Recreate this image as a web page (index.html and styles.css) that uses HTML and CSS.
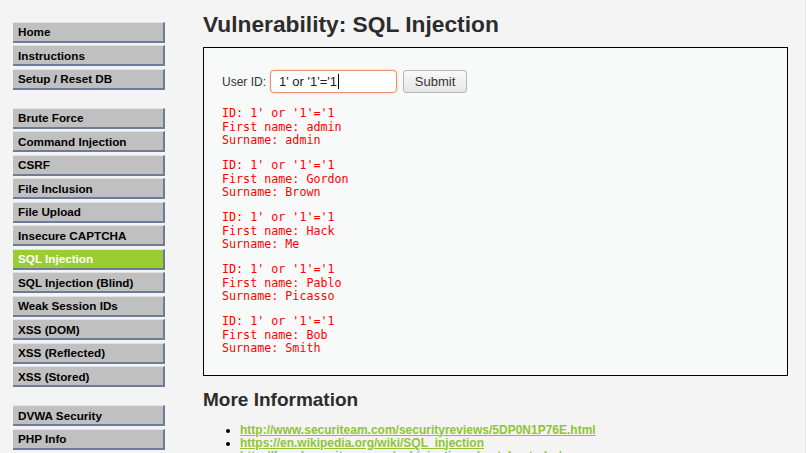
FILE: index.html
```html
<!DOCTYPE html>
<html>
<head>
<meta charset="utf-8">
<title>Vulnerability: SQL Injection</title>
<link rel="stylesheet" href="styles.css">
</head>
<body>
<div class="page">
  <nav class="menu">
    <ul class="menu-block">
      <li><a href="#">Home</a></li>
      <li><a href="#">Instructions</a></li>
      <li><a href="#">Setup / Reset DB</a></li>
    </ul>
    <ul class="menu-block">
      <li><a href="#">Brute Force</a></li>
      <li><a href="#">Command Injection</a></li>
      <li><a href="#">CSRF</a></li>
      <li><a href="#">File Inclusion</a></li>
      <li><a href="#">File Upload</a></li>
      <li><a href="#">Insecure CAPTCHA</a></li>
      <li class="selected"><a href="#">SQL Injection</a></li>
      <li><a href="#">SQL Injection (Blind)</a></li>
      <li><a href="#">Weak Session IDs</a></li>
      <li><a href="#">XSS (DOM)</a></li>
      <li><a href="#">XSS (Reflected)</a></li>
      <li><a href="#">XSS (Stored)</a></li>
    </ul>
    <ul class="menu-block">
      <li><a href="#">DVWA Security</a></li>
      <li><a href="#">PHP Info</a></li>
    </ul>
  </nav>
  <main class="body-padded">
    <h1 class="title">Vulnerability: SQL Injection</h1>
    <div class="vuln-area">
      <form class="id-form">
        <label class="id-label">User ID:</label>
        <span class="id-input"><span class="id-value">1' or '1'='1</span><span class="caret"></span></span>
        <span class="submit-btn">Submit</span>
      </form>
      <pre class="result">ID: 1' or '1'='1
First name: admin
Surname: admin</pre>
      <pre class="result">ID: 1' or '1'='1
First name: Gordon
Surname: Brown</pre>
      <pre class="result">ID: 1' or '1'='1
First name: Hack
Surname: Me</pre>
      <pre class="result">ID: 1' or '1'='1
First name: Pablo
Surname: Picasso</pre>
      <pre class="result">ID: 1' or '1'='1
First name: Bob
Surname: Smith</pre>
    </div>
    <h2 class="sub-title">More Information</h2>
    <ul class="links">
      <li><a href="#">http://www.securiteam.com/securityreviews/5DP0N1P76E.html</a></li>
      <li><a href="#">https://en.wikipedia.org/wiki/SQL_injection</a></li>
      <li><a href="#">http://ferruh.mavituna.com/sql-injection-cheatsheet-oku/</a></li>
    </ul>
  </main>
</div>
</body>
</html>
```
FILE: styles.css
```css
html, body {
  margin: 0;
  padding: 0;
  height: 100%;
  overflow: hidden;
}
body {
  background: #f4f4f4;
  font-family: "Liberation Sans", Arial, sans-serif;
  font-size: 13px;
  color: #000;
}
.page {
  display: flex;
  width: 806px;
  height: 453px;
  box-sizing: border-box;
  border-right: 1px solid #e6e6e6;
  overflow: hidden;
}
.menu {
  width: 152px;
  flex: none;
  padding: 21.5px 0 0 13px;
}
.menu-block {
  list-style: none;
  margin: 0 0 18px 0;
  padding: 0;
}
.menu-block li {
  margin: 0 0 2.5px 0;
}
.menu-block a {
  display: block;
  padding: 2.5px 0 2.5px 5px;
  background: #c0c0c0;
  border-top: 1px solid #e2e2e2;
  border-right: 2px solid #6e7c99;
  border-bottom: 2px solid #6e7c99;
  font-size: 11.7px;
  line-height: 13px;
  font-weight: bold;
  color: #000;
  text-decoration: none;
}
.menu-block li.selected a {
  background: #9acd32;
  color: #fff;
}
.body-padded {
  flex: none;
  width: 585px;
  margin-left: 38px;
}
.title {
  font-size: 22.75px;
  font-weight: bold;
  color: #2c2c2c;
  margin: 10.5px 0 10.5px 0;
  line-height: 26px;
}
.vuln-area {
  border: 1px solid #000;
  background: #f8f9f9;
  padding: 22px 18px 19px 18px;
}
.id-form {
  display: flex;
  align-items: center;
  margin: 0 0 14px 0;
  font-size: 13px;
  color: #333;
}
.id-label {
  font-size: 12px;
  margin-right: 4px;
}
.id-input {
  display: flex;
  align-items: center;
  box-sizing: border-box;
  width: 127px;
  height: 23px;
  padding: 0 0 0 8px;
  border: 1px solid #e8926e;
  border-radius: 4px;
  background: #fff;
  box-shadow: 0 0 2px rgba(232, 146, 110, 0.5);
  color: #222;
}
.caret {
  display: inline-block;
  width: 1px;
  height: 15px;
  background: #000;
  margin-left: 1px;
}
.submit-btn {
  box-sizing: border-box;
  width: 64px;
  height: 23px;
  margin-left: 6px;
  display: flex;
  align-items: center;
  justify-content: center;
  border: 1px solid #b5b5b5;
  border-radius: 3px;
  background: linear-gradient(#f9f9f9, #e6e6e6);
  color: #333;
}
.result {
  font-family: "DejaVu Sans Mono", monospace;
  font-size: 11.7px;
  line-height: 13.5px;
  color: #f00;
  margin: 0 0 11.5px 0;
}
.result:last-child {
  margin-bottom: 0;
}
.sub-title {
  font-size: 19px;
  font-weight: bold;
  color: #2c2c2c;
  margin: 13px 0 13px 0;
}
.links {
  margin: 0;
  padding-left: 37px;
  line-height: 13px;
  font-size: 12px;
}
.links a {
  color: #8fc532;
  font-weight: bold;
  text-decoration: underline;
  font-size: 12px;
}
```
